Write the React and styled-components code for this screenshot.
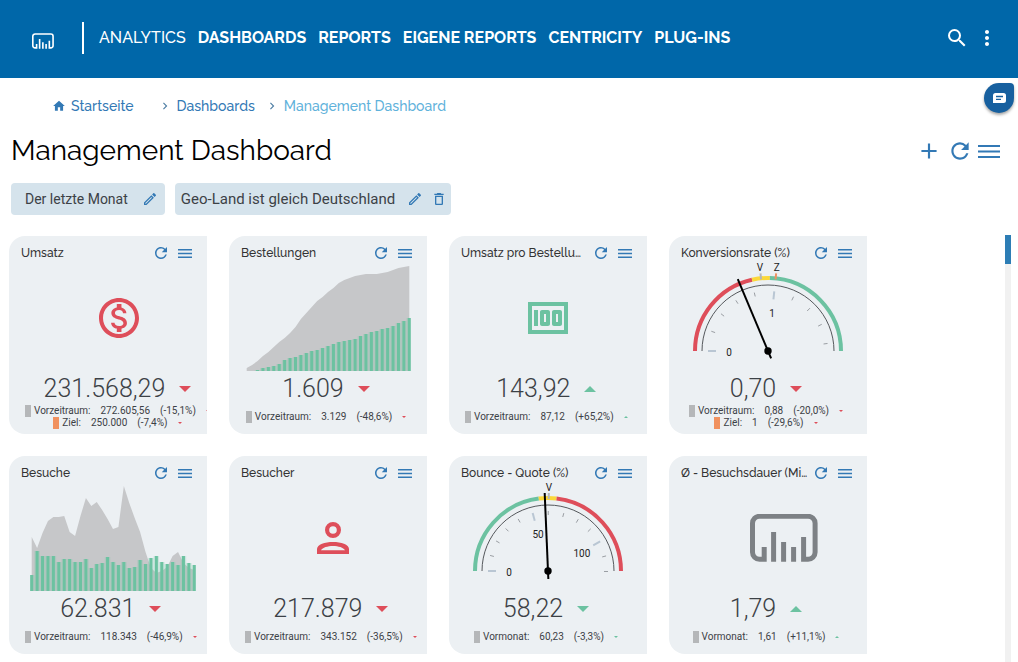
import * as React from "react"
import styled, { createGlobalStyle, ThemeProvider } from "styled-components";
import {
    MdAdd,
    MdChevronRight,
    MdDeleteOutline,
    MdHome,
    MdMoney,
    MdMoreVert,
    MdOutlineEdit,
    MdOutlineMonetizationOn,
    MdRefresh,
    MdSearch,
} from "react-icons/md";

const theme = {
    blue: '#0067A9',
    link: '#3379B5',
    current: '#5FB2DB',
    card: '#ECF0F3',
    chip: '#D5E3EC',
    text: '#3C4146',
    grey: '#B5B7B9',
    area: '#C6C7C9',
    red: '#DE4E5A',
    green: '#6CC2A1',
    yellow: '#FBD83A',
    orange: '#F0915F',
    heading: 'Raleway, Lato, sans-serif',
    body: 'Roboto, sans-serif',
}

const orders = {
    area: [3, 6, 10, 15, 19, 24, 29, 33, 38, 44, 52, 58, 64, 70, 74, 79, 83, 88, 91, 93, 95, 96, 97, 97, 97, 98, 99, 101, 103, 104, 105],
    bars: [0, 0, 1, 3, 4, 5, 7, 11, 13, 14, 16, 18, 20, 21, 23, 25, 27, 29, 30, 31, 32, 35, 37, 39, 40, 42, 43, 45, 48, 50, 53],
}

const visits = {
    area: [54, 43, 58, 70, 74, 74, 75, 59, 55, 75, 93, 85, 89, 81, 72, 62, 64, 105, 88, 73, 59, 39, 23, 18, 20, 24, 35, 39, 28, 23, 21],
    bars: [16, 40, 35, 35, 35, 29, 32, 32, 29, 29, 32, 23, 27, 28, 34, 29, 26, 29, 23, 24, 31, 27, 33, 35, 29, 27, 29, 26, 35, 28, 26],
}

const conversion = {
    value: 0.7,
    degrees: 96,
    bands: [[0, 0.806, theme.red], [0.806, 0.953, theme.yellow], [0.953, 1.875, theme.green]],
    step: 0.2,
    steps: 9,
    labels: [0, 1],
    marks: [['V', 0.88, theme.grey], ['Z', 1, theme.orange]],
}

const bounce = {
    value: 58.22,
    degrees: 1.504,
    bands: [[0, 55, theme.green], [55, 64.3, theme.yellow], [64.3, 119.68, theme.red]],
    step: 10,
    steps: 12,
    labels: [0, 50, 100],
    marks: [['V', 60.23, theme.grey]],
}

const MenuIcon = ({ width, height, line }) => (
    <svg width={width} height={height} viewBox={`0 0 ${width} ${height}`} fill="currentColor" aria-hidden="true">
        <rect width={width} height={line}/>
        <rect y={(height - line) / 2} width={width} height={line}/>
        <rect y={height - line} width={width} height={line}/>
    </svg>
)

const LogoShape = () => (
    <g fill="none" stroke="currentColor" strokeWidth="5">
        <path d="M14.2 33v12.3H9.5a7 7 0 0 1-7-7v-29a7 7 0 0 1 7-7h48.6a7 7 0 0 1 7 7v29a7 7 0 0 1-7 7h-4.5V23"/>
        <path d="M23.6 18v29.8M33.6 28v19.8M43.6 33v14.8"/>
    </g>
)

const PersonIcon = () => (
    <svg width="32" height="32" viewBox="0 0 32 32" fill="currentColor" fillRule="evenodd" aria-hidden="true">
        <path d="M16 0a8 8 0 1 1 0 16 8 8 0 0 1 0-16zm0 4.2a3.8 3.8 0 1 0 0 7.6 3.8 3.8 0 0 0 0-7.6z"/>
        <path d="M0 32v-5c0-4.4 8-7 16-7s16 2.6 16 7v5zM4 28.2h24c-1.600-2.600-6.600-4.200-12-4.200s-10.400 1.600-12 4.200z"/>
    </svg>
)

const PITCH = 5.42
const BASE = 109

const Chart = ({ area, bars }) => {
    const x = i => 1.7 + i * PITCH
    const line = area.map((h, i) => `L${x(i)} ${BASE - h}`).join('')

    return (
        <svg width="166" height="112" viewBox="0 0 166 112" aria-hidden="true">
            <path d={`M${x(0)} ${BASE}${line}V${BASE}Z`} fill={theme.area}/>
            {bars.map((h, i) => (
                <g key={i} fill={theme.green}>
                    <rect x={x(i) - PITCH / 2} y={BASE - h} width={i === bars.length - 1 ? PITCH / 2 : PITCH} height={h} opacity="0.25"/>
                    <rect x={x(i) - 1.5} y={BASE - h} width="3" height={h}/>
                </g>
            ))}
        </svg>
    )
}

// the scale starts at nine o'clock and runs clockwise
const point = (deg, r) => {
    const rad = deg * Math.PI / 180
    return [83 - r * Math.cos(rad), 89 - r * Math.sin(rad)]
}

const ray = (deg, from, to) => `M${point(deg, from).join(' ')}L${point(deg, to).join(' ')}`

const arc = (from, to, r) => `M${point(from, r).join(' ')}A${r} ${r} 0 0 1 ${point(to, r).join(' ')}`

const Gauge = ({ value, degrees, bands, step, steps, labels, marks }) => {
    const ticks = Array.from({ length: steps + 1 }, (_, i) => i)

    return (
        <svg width="166" height="112" viewBox="0 0 166 112" fill="none" aria-hidden="true">
            {bands.map(([from, to, color]) => (
                <path key={from} d={arc(from * degrees, to * degrees, 73)} stroke={color} strokeWidth="4"/>
            ))}
            <path d={arc(0, 180, 66)} stroke="#55585C" strokeWidth="1"/>
            {ticks.map(i => (
                <path
                    key={i}
                    d={ray(i * step * degrees, i % 5 === 0 ? 52 : 56, 60)}
                    stroke={i % 5 === 0 ? '#B9C6D3' : '#9A9EA3'}
                    strokeWidth={i % 5 === 0 ? 2 : 1}
                />
            ))}
            {labels.map(label => {
                const [x, y] = point(label * degrees, 39)
                return <GaugeText key={label} x={x} y={y + 5}>{label}</GaugeText>
            })}
            {marks.map(([name, at, color]) => {
                const [x, y] = point(at * degrees, 84)
                return (
                    <g key={name}>
                        <path d={ray(at * degrees, 72, 78)} stroke={color} strokeWidth="2"/>
                        <GaugeText x={x} y={y + 4}>{name}</GaugeText>
                    </g>
                )
            })}
            <path d={ray(value * degrees, -8, 78)} stroke="#000" strokeWidth="2"/>
            <circle cx="83" cy="89" r="3.700" fill="#000"/>
        </svg>
    )
}

const cards = [
    {
        title: 'Umsatz',
        figure: <MdOutlineMonetizationOn size={48}/>,
        tone: 'red',
        value: '231.568,29',
        trend: 'down',
        details: [
            { label: 'Vorzeitraum:', value: '272.605,56', change: '(-15,1%)' },
            { label: 'Ziel:', value: '250.000', change: '(-7,4%)', target: true },
        ],
    },
    {
        title: 'Bestellungen',
        figure: <Chart {...orders}/>,
        tone: 'red',
        value: '1.609',
        trend: 'down',
        details: [{ label: 'Vorzeitraum:', value: '3.129', change: '(-48,6%)' }],
    },
    {
        title: 'Umsatz pro Bestellu…',
        figure: <MdMoney size={48}/>,
        tone: 'green',
        value: '143,92',
        trend: 'up',
        details: [{ label: 'Vorzeitraum:', value: '87,12', change: '(+65,2%)' }],
    },
    {
        title: 'Konversionsrate (%)',
        figure: <Gauge {...conversion}/>,
        tone: 'red',
        value: '0,70',
        trend: 'down',
        details: [
            { label: 'Vorzeitraum:', value: '0,88', change: '(-20,0%)' },
            { label: 'Ziel:', value: '1', change: '(-29,6%)', target: true },
        ],
    },
    {
        title: 'Besuche',
        figure: <Chart {...visits}/>,
        tone: 'red',
        value: '62.831',
        trend: 'down',
        details: [{ label: 'Vorzeitraum:', value: '118.343', change: '(-46,9%)' }],
    },
    {
        title: 'Besucher',
        figure: <PersonIcon/>,
        tone: 'red',
        value: '217.879',
        trend: 'down',
        details: [{ label: 'Vorzeitraum:', value: '343.152', change: '(-36,5%)' }],
    },
    {
        title: 'Bounce - Quote (%)',
        figure: <Gauge {...bounce}/>,
        tone: 'green',
        value: '58,22',
        trend: 'down',
        details: [{ label: 'Vormonat:', value: '60,23', change: '(-3,3%)' }],
    },
    {
        title: 'Ø - Besuchsdauer (Mi…',
        figure: (
            <LogoFigure width="100" height="48" viewBox="-32 0 100 48" aria-hidden="true">
                <LogoShape/>
            </LogoFigure>
        ),
        tone: 'green',
        value: '1,79',
        trend: 'up',
        details: [{ label: 'Vormonat:', value: '1,61', change: '(+11,1%)' }],
    },
]

function LogoFigure(props) {
    return <svg color="#7D8185" {...props}/>
}

const KpiCard = ({ title, figure, tone, value, trend, details }) => (
    <Card>
        <CardHead>
            <CardTitle>{title}</CardTitle>
            <IconButton aria-label="Aktualisieren"><MdRefresh size={18}/></IconButton>
            <IconButton aria-label="Menü"><MenuIcon width={14} height={9} line={1.5}/></IconButton>
        </CardHead>

        <CardBody>
            <Figure $tone={tone}>{figure}</Figure>

            <ValueRow>
                <Value>{value}</Value>
                <Arrow $tone={tone} $trend={trend} $size={6}/>
            </ValueRow>

            <Details>
                {details.map(row => (
                    <DetailRow key={row.label}>
                        <DetailLabel $target={row.target}>{row.label}</DetailLabel>
                        <span>{row.value}</span>
                        <span>{row.change}</span>
                        <Arrow $tone={tone} $trend={trend} $size={2}/>
                    </DetailRow>
                ))}
            </Details>
        </CardBody>
    </Card>
)

const App = () => {
    return (
        <ThemeProvider theme={theme}>
            <GlobalStyle/>
            <Page>
                <Header>
                    <Logo width="22" height="16" viewBox="0 0 68 48" aria-hidden="true"><LogoShape/></Logo>
                    <Nav>
                        <Brand href="#">ANALYTICS</Brand>
                        <NavLink href="#">DASHBOARDS</NavLink>
                        <NavLink href="#">REPORTS</NavLink>
                        <NavLink href="#">EIGENE REPORTS</NavLink>
                        <NavLink href="#">CENTRICITY</NavLink>
                        <NavLink href="#">PLUG-INS</NavLink>
                    </Nav>
                    <HeaderButton aria-label="Suche"><MdSearch size={24}/></HeaderButton>
                    <HeaderButton aria-label="Mehr"><MdMoreVert size={24}/></HeaderButton>
                </Header>

                <Main>
                    <ChatButton aria-label="Chat">
                        <svg width="13" height="10" viewBox="0 0 13 10" aria-hidden="true">
                            <path d="M2.500 0h8A2.500 2.500 0 0 1 13 2.500v5A2.500 2.500 0 0 1 10.500 10H0V2.500A2.500 2.500 0 0 1 2.500 0z" fill="#fff"/>
                            <path d="M3 3.500h7M3 6.300h5" stroke="#17609F" strokeWidth="1.300"/>
                        </svg>
                    </ChatButton>

                    <Breadcrumb aria-label="Breadcrumb">
                        <Crumb href="#"><MdHome size={14}/>Startseite</Crumb>
                        <Separator $wide><MdChevronRight size={14}/></Separator>
                        <Crumb href="#">Dashboards</Crumb>
                        <Separator><MdChevronRight size={14}/></Separator>
                        <Crumb href="#" $current>Management Dashboard</Crumb>
                    </Breadcrumb>

                    <TitleRow>
                        <Title>Management Dashboard</Title>
                        <IconButton aria-label="Hinzufügen"><MdAdd size={26}/></IconButton>
                        <IconButton aria-label="Aktualisieren"><MdRefresh size={26}/></IconButton>
                        <IconButton aria-label="Menü"><MenuIcon width={22} height={13} line={2}/></IconButton>
                    </TitleRow>

                    <Filters>
                        <Chip $inset={14}>
                            <ChipText>Der letzte Monat</ChipText>
                            <IconButton aria-label="Bearbeiten"><MdOutlineEdit size={16}/></IconButton>
                        </Chip>
                        <Chip $inset={6}>
                            <ChipText $large>Geo-Land ist gleich Deutschland</ChipText>
                            <IconButton aria-label="Bearbeiten"><MdOutlineEdit size={16}/></IconButton>
                            <IconButton aria-label="Löschen"><MdDeleteOutline size={16}/></IconButton>
                        </Chip>
                    </Filters>

                    <Board>
                        <Cards>
                            {cards.map(card => <KpiCard key={card.title} {...card}/>)}
                        </Cards>
                        <ScrollTrack><ScrollThumb/></ScrollTrack>
                    </Board>
                </Main>
            </Page>
        </ThemeProvider>
    )
}

export default App

const GlobalStyle = createGlobalStyle`
    * {
        box-sizing: border-box;
    }

    body {
        margin: 0;
        background: #fff;
        color: ${theme.text};
        font-family: ${theme.body};
    }

    svg {
        display: block;
        flex: none;
    }
`;

const Page = styled.div`
    min-height: 100vh;
    display: flex;
    flex-direction: column;
`;

const Header = styled.header`
    height: 78px;
    padding: 0 19px 2px 32px;
    display: flex;
    align-items: center;
    background: ${props => props.theme.blue};
    color: #fff;
`;

const Logo = styled.svg`
    margin-top: 6px;
`;

const Nav = styled.nav`
    flex: 1;
    display: flex;
    align-items: center;
    gap: 12px;
    height: 32px;
    margin-left: 28px;
    padding-left: 15px;
    border-left: 2px solid #fff;
`;

const NavLink = styled.a`
    color: #fff;
    font-family: ${props => props.theme.heading};
    font-size: 16px;
    font-weight: 700;
    line-height: 20px;
    text-decoration: none;
    white-space: nowrap;
`;

const Brand = styled(NavLink)`
    font-weight: 500;
`;

const IconButton = styled.button`
    display: flex;
    align-items: center;
    padding: 0;
    border: 0;
    background: none;
    color: ${props => props.theme.link};
    cursor: pointer;
`;

const HeaderButton = styled(IconButton)`
    margin-left: 6px;
    color: #fff;
`;

const Main = styled.main`
    position: relative;
    flex: 1;
    display: flex;
    flex-direction: column;
`;

const ChatButton = styled(IconButton)`
    position: absolute;
    top: 5px;
    right: 4px;
    width: 30px;
    height: 30px;
    justify-content: center;
    border-radius: 50% 4px 50% 50%;
    background: #17609F;
    box-shadow: 0 2px 3px rgba(0, 0, 0, 0.35);
`;

const Breadcrumb = styled.nav`
    display: flex;
    align-items: center;
    height: 56px;
    padding-left: 52px;
`;

const Crumb = styled.a`
    display: flex;
    align-items: center;
    gap: 5px;
    color: ${props => props.$current ? props.theme.current : props.theme.link};
    font-family: ${props => props.theme.heading};
    font-size: 14px;
    font-weight: 500;
    line-height: 20px;
    text-decoration: none;
`;

const Separator = styled.span`
    margin: 0 5px 0 ${props => props.$wide ? 24 : 10}px;
    color: #4F7FA5;
`;

const TitleRow = styled.div`
    display: flex;
    align-items: center;
    gap: 5px;
    height: 34px;
    padding: 0 18px 0 11px;
`;

const Title = styled.h1`
    flex: 1;
    margin: 0;
    color: #000;
    font-family: ${props => props.theme.heading};
    font-size: 28px;
    font-weight: 400;
    line-height: 34px;
`;

const Filters = styled.div`
    display: flex;
    gap: 10px;
    margin: 15px 11px 20px;
`;

const Chip = styled.div`
    display: flex;
    align-items: center;
    gap: 8px;
    height: 32px;
    padding: 0 ${props => props.$inset > 10 ? 7 : 4}px 0 ${props => props.$inset}px;
    border-radius: 4px;
    background: ${props => props.theme.chip};
`;

const ChipText = styled.span`
    margin-right: ${props => props.$large ? 4 : 6}px;
    font-size: ${props => props.$large ? 15 : 14}px;
    line-height: 20px;
`;

const Board = styled.div`
    flex: 1;
    display: flex;
    padding: 0 7px 0 9px;
`;

const Cards = styled.div`
    flex: 1;
    display: grid;
    grid-template-columns: repeat(auto-fill, 198px);
    align-content: start;
    gap: 22px;
    padding: 1px 0 8px;
`;

const ScrollTrack = styled.div`
    width: 6px;
    background: #F1F1F1;
`;

const ScrollThumb = styled.div`
    height: 29px;
    background: #2D7DB5;
`;

const Card = styled.section`
    overflow: hidden;
    padding-bottom: 5px;
    border-radius: 16px 0 0 16px;
    background: ${props => props.theme.card};
`;

const CardHead = styled.div`
    display: flex;
    align-items: center;
    gap: 8px;
    height: 26px;
    padding: 8px 15px 0 12px;
`;

const CardTitle = styled.h2`
    flex: 1;
    min-width: 0;
    margin: 0;
    color: #333;
    font-family: ${props => props.theme.heading};
    font-size: 12px;
    font-weight: 500;
    line-height: 18px;
    white-space: nowrap;
`;

const CardBody = styled.div`
    width: max-content;
    min-width: 162px;
    margin-left: 16px;
    display: flex;
    flex-direction: column;
    align-items: center;
`;

const Figure = styled.div`
    display: flex;
    align-items: center;
    justify-content: center;
    height: 112px;
    width: 162px;
    padding-left: 4px;
    color: ${props => props.theme[props.$tone]};
`;

const ValueRow = styled.div`
    display: flex;
    align-items: center;
    gap: 14px;
`;

const Value = styled.span`
    font-size: 25px;
    font-weight: 300;
    line-height: 29px;
`;

const Arrow = styled.i`
    border: ${props => props.$size}px solid transparent;
    border-width: 0 ${props => props.$size}px;
    border-${props => props.$trend === 'up' ? 'bottom' : 'top'}: ${props => props.$size}px solid ${props => props.theme[props.$tone]};
`;

const Details = styled.div`
    display: flex;
    flex-direction: column;
    align-items: center;
    justify-content: center;
    height: 24px;
    margin-top: 2px;
`;

const DetailRow = styled.div`
    display: flex;
    align-items: center;
    gap: 10px;
    font-size: 10px;
    line-height: 12px;
    white-space: nowrap;
`;

const DetailLabel = styled.span`
    padding-left: 3px;
    border-left: 6px solid ${props => props.$target ? props.theme.orange : props.theme.grey};
`;

const GaugeText = styled.text`
    fill: #222;
    font-family: ${props => props.theme.body};
    font-size: 10px;
    text-anchor: middle;
`;
